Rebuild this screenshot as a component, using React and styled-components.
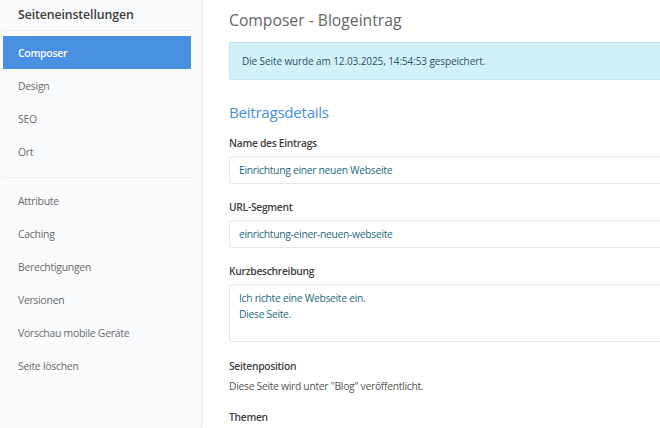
import React from "react";
import styled, { createGlobalStyle } from "styled-components";

const Global = createGlobalStyle`
  html, body { margin: 0; padding: 0; background: #fff; }
  body { font-family: "Open Sans", "Noto Sans", sans-serif; overflow: hidden; }
  * { box-sizing: border-box; }
`;

const Layout = styled.div`
  display: flex;
  width: 660px;
  height: 428px;
  overflow: hidden;
`;

const Sidebar = styled.aside`
  width: 202px;
  flex-shrink: 0;
  background: #f9fafb;
  border-right: 1px solid #ececec;
  box-shadow: 1px 0 2px rgba(0,0,0,0.04);
  padding: 0 10px 0 3px;
`;

const SideTitle = styled.div`
  font-size: 12.3px;
  font-weight: 600;
  letter-spacing: -0.1px;
  color: #3d3d3d;
  line-height: 18px;
  padding: 6px 0 0 15px;
  height: 31px;
  border-bottom: 1px solid #ebedf0;
`;

const Divider = styled.div`
  border-top: 1px solid #ebedf0;
  margin: 9px 0 6px;
`;

const NavList = styled.div`
  display: flex;
  flex-direction: column;
  padding-top: 5px;
`;

const NavItem = styled.div`
  height: 33px;
  display: flex;
  align-items: center;
  padding-left: 15px;
  font-size: 10.4px;
  letter-spacing: -0.25px;
  color: ${(p) => (p.$active ? "#fff" : "#6b6b6b")};
  background: ${(p) => (p.$active ? "#4a90e2" : "transparent")};
  font-weight: ${(p) => (p.$active ? 600 : 400)};
`;

const Main = styled.main`
  flex: 1;
  padding: 10px 0 0 27px;
  min-width: 0;
`;

const PageTitle = styled.h1`
  margin: 0;
  font-size: 15.7px;
  line-height: 20px;
  font-weight: 400;
  color: #666;
  height: 32px;
`;

const Alert = styled.div`
  background: #d1f0fa;
  border: 1px solid #bfe6f3;
  border-right: none;
  border-radius: 2px 0 0 2px;
  height: 38px;
  display: flex;
  align-items: center;
  padding-left: 12px;
  font-size: 10px;
  letter-spacing: -0.1px;
  color: #2b5566;
  margin-right: -4px;
`;

const SectionTitle = styled.h2`
  margin: 20px 0 0;
  font-size: 15.2px;
  letter-spacing: -0.3px;
  line-height: 24px;
  font-weight: 400;
  color: #4a90e2;
  height: 24px;
`;

const Label = styled.div`
  font-size: 10.3px;
  letter-spacing: -0.3px;
  font-weight: 600;
  color: #3f3f3f;
  line-height: 14px;
  height: 14px;
  margin-top: ${(p) => p.$mt || 0}px;
`;

const Field = styled.div`
  margin-top: 6px;
  height: ${(p) => p.$h || 28}px;
  border: 1px solid #e8e8e8;
  border-right: none;
  border-radius: 3px 0 0 3px;
  padding: ${(p) => (p.$multi ? "5px 9px" : "0 9px")};
  display: flex;
  flex-direction: column;
  justify-content: ${(p) => (p.$multi ? "flex-start" : "center")};
  font-size: 10.3px;
  letter-spacing: -0.28px;
  line-height: 16px;
  color: #226b7d;
  margin-right: -4px;
`;

const Text = styled.div`
  font-size: 10.3px;
  letter-spacing: -0.28px;
  line-height: 14px;
  color: #555;
  margin-top: 6px;
`;

const navTop = ["Composer", "Design", "SEO", "Ort"];
const navBottom = ["Attribute", "Caching", "Berechtigungen", "Versionen", "Vorschau mobile Geräte", "Seite löschen"];

export default function App() {
  return (
    <>
      <Global />
      <Layout>
        <Sidebar>
          <SideTitle>Seiteneinstellungen</SideTitle>
          <NavList>
            {navTop.map((n, i) => (
              <NavItem key={n} $active={i === 0}>{n}</NavItem>
            ))}
            <Divider />
            {navBottom.map((n) => (
              <NavItem key={n}>{n}</NavItem>
            ))}
          </NavList>
        </Sidebar>
        <Main>
          <PageTitle>Composer - Blogeintrag</PageTitle>
          <Alert>Die Seite wurde am 12.03.2025, 14:54:53 gespeichert.</Alert>
          <SectionTitle>Beitragsdetails</SectionTitle>
          <Label $mt={12}>Name des Eintrags</Label>
          <Field>Einrichtung einer neuen Webseite</Field>
          <Label $mt={16}>URL-Segment</Label>
          <Field>einrichtung-einer-neuen-webseite</Field>
          <Label $mt={16}>Kurzbeschreibung</Label>
          <Field $multi $h={58}>
            <span>Ich richte eine Webseite ein.</span>
            <span>Diese Seite.</span>
          </Field>
          <Label $mt={17}>Seitenposition</Label>
          <Text>Diese Seite wird unter "Blog" veröffentlicht.</Text>
          <Label $mt={17}>Themen</Label>
        </Main>
      </Layout>
    </>
  );
}
